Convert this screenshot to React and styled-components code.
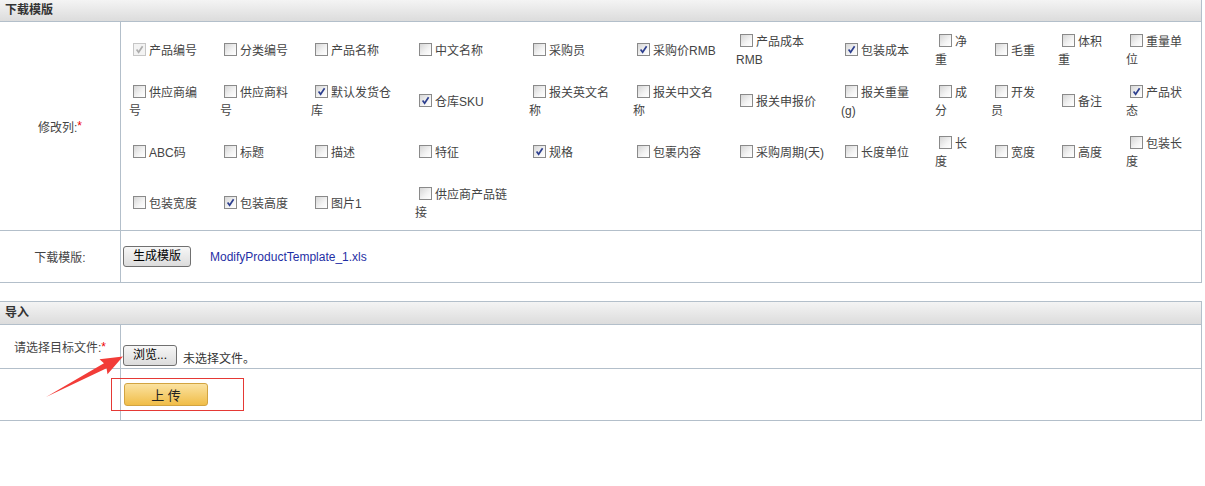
import React from "react";
import styled, { createGlobalStyle } from "styled-components";

const GlobalStyle = createGlobalStyle`
  body {
    margin: 0;
    background: #fff;
    font-family: "Liberation Sans", Arial, "Noto Sans CJK SC", sans-serif;
    font-size: 12px;
    color: #333;
  }
`;

const LINE = "#b3bfca";

const Page = styled.div`
  position: relative;
  width: 1205px;
  height: 486px;
  overflow: hidden;
`;

// 一个区块（标题 + 表格行）
const Panel = styled.div`
  width: 1202px;
  box-sizing: border-box;
  border-right: 1px solid ${LINE};
  border-top: ${(p) => (p.$first ? "none" : `1px solid ${LINE}`)};
  margin-bottom: 18px;
`;

const PanelHeader = styled.div`
  height: ${(p) => (p.$first ? 21 : 22)}px;
  line-height: ${(p) => (p.$first ? 21 : 22)}px;
  padding-left: 5px;
  font-weight: bold;
  color: #333;
  background: linear-gradient(#f4f4f4, #dcdcdc);
  border-bottom: 1px solid ${LINE};
`;

const Row = styled.div`
  display: grid;
  grid-template-columns: 121px 1fr;
  min-height: ${(p) => p.$h || 51}px;
  border-bottom: 1px solid ${LINE};
`;

const Label = styled.div`
  box-sizing: border-box;
  border-right: 1px solid ${LINE};
  display: flex;
  align-items: center;
  justify-content: center;
  color: #444;
`;

const Star = styled.span`
  color: #e00;
`;

const Cell = styled.div`
  display: flex;
  align-items: ${(p) => p.$align || "center"};
  padding: ${(p) => p.$pad || "0 0 0 2px"};
`;

// 勾选列的网格
const ColumnGrid = styled.div`
  display: grid;
  grid-template-columns: 91px 91px 104px 114px 104px 103px 105px 94px 56px 67px 68px 1fr;
  grid-auto-rows: 51px;
  align-items: center;
  padding: 3px 0 1px;
`;

const Item = styled.div`
  padding: 0 8px;
  line-height: 18px;
  color: #444;
`;

const Box = styled.span`
  display: inline-block;
  box-sizing: border-box;
  width: 13px;
  height: 13px;
  margin: 0 3px 0 4px;
  vertical-align: -1px;
  border: 1px solid ${(p) => (p.$disabled ? "#c6c6c6" : "#8a8a8a")};
  background: ${(p) =>
    p.$disabled
      ? "#f3f3f3"
      : "linear-gradient(135deg, #d6d6d6 0%, #f4f4f4 60%, #ffffff 100%)"};
  position: relative;

  svg {
    position: absolute;
    left: 0;
    top: 0;
  }
`;

const GrayButton = styled.button`
  height: 21px;
  padding: 0 9px;
  border: 1px solid #707070;
  border-radius: 3px;
  background: linear-gradient(#f7f7f7, #dcdcdc);
  font-family: inherit;
  font-size: 12px;
  color: #000;
  line-height: 19px;
`;

const FileLink = styled.a`
  margin-left: 19px;
  color: #1f2fa5;
  text-decoration: none;
`;

const NoFile = styled.span`
  margin-left: 6px;
  color: #333;
`;

const UploadButton = styled.button`
  width: 84px;
  height: 23px;
  border: 1px solid #d2a441;
  border-radius: 3px;
  background: linear-gradient(#fbe2a0, #f0bd48);
  font-family: inherit;
  font-size: 13px;
  color: #222;
  margin-left: 1px;
`;

// 标注（红框、箭头）
const Highlight = styled.div`
  position: absolute;
  left: 111px;
  top: 378px;
  width: 133px;
  height: 33px;
  box-sizing: border-box;
  border: 1px solid #e53935;
  pointer-events: none;
`;

const ArrowLayer = styled.svg`
  position: absolute;
  left: 0;
  top: 0;
  pointer-events: none;
`;

const columns = [
  ["产品编号", "disabled"], ["分类编号"], ["产品名称"], ["中文名称"], ["采购员"],
  ["采购价RMB", true], ["产品成本RMB"], ["包装成本", true], ["净重"], ["毛重"],
  ["体积重"], ["重量单位"],
  ["供应商编号"], ["供应商料号"], ["默认发货仓库", true], ["仓库SKU", true],
  ["报关英文名称"], ["报关中文名称"], ["报关申报价"], ["报关重量(g)"], ["成分"],
  ["开发员"], ["备注"], ["产品状态", true],
  ["ABC码"], ["标题"], ["描述"], ["特征"], ["规格", true], ["包裹内容"],
  ["采购周期(天)"], ["长度单位"], ["长度"], ["宽度"], ["高度"], ["包装长度"],
  ["包装宽度"], ["包装高度", true], ["图片1"], ["供应商产品链接"],
];

const Check = ({ state }) => {
  const disabled = state === "disabled";
  return (
    <Box $disabled={disabled}>
      {state && (
        <svg width="11" height="11" viewBox="0 0 11 11">
          <path
            d="M2.6 5.6 L4.6 8.2 L8.6 2.2"
            fill="none"
            stroke={disabled ? "#adadad" : "#2d3f8f"}
            strokeWidth="1.7"
          />
        </svg>
      )}
    </Box>
  );
};

const App = () => (
  <Page>
    <GlobalStyle />
    <Panel $first>
      <PanelHeader $first>下载模版</PanelHeader>
      <Row $h={208}>
        <Label>
          修改列:<Star>*</Star>
        </Label>
        <ColumnGrid>
          {columns.map(([name, state]) => (
            <Item key={name}>
              <Check state={state} />
              {name}
            </Item>
          ))}
        </ColumnGrid>
      </Row>
      <Row>
        <Label>下载模版:</Label>
        <Cell>
          <GrayButton>生成模版</GrayButton>
          <FileLink href="#">ModifyProductTemplate_1.xls</FileLink>
        </Cell>
      </Row>
    </Panel>

    <Panel>
      <PanelHeader>导入</PanelHeader>
      <Row $h={43}>
        <Label>
          请选择目标文件:<Star>*</Star>
        </Label>
        <Cell $align="flex-end" $pad="0 0 2px 2px">
          <GrayButton>浏览...</GrayButton>
          <NoFile>未选择文件。</NoFile>
        </Cell>
      </Row>
      <Row>
        <Label />
        <Cell>
          <UploadButton>上 传</UploadButton>
        </Cell>
      </Row>
    </Panel>

    <Highlight />
    <ArrowLayer width="1205" height="486">
      <g transform="translate(46 397) rotate(-27.8)">
        <polygon
          points="0,0 67,-2.8 65,-8.5 87,0 65,8.5 67,2.8"
          fill="#f23c38"
        />
      </g>
    </ArrowLayer>
  </Page>
);

export default App;
